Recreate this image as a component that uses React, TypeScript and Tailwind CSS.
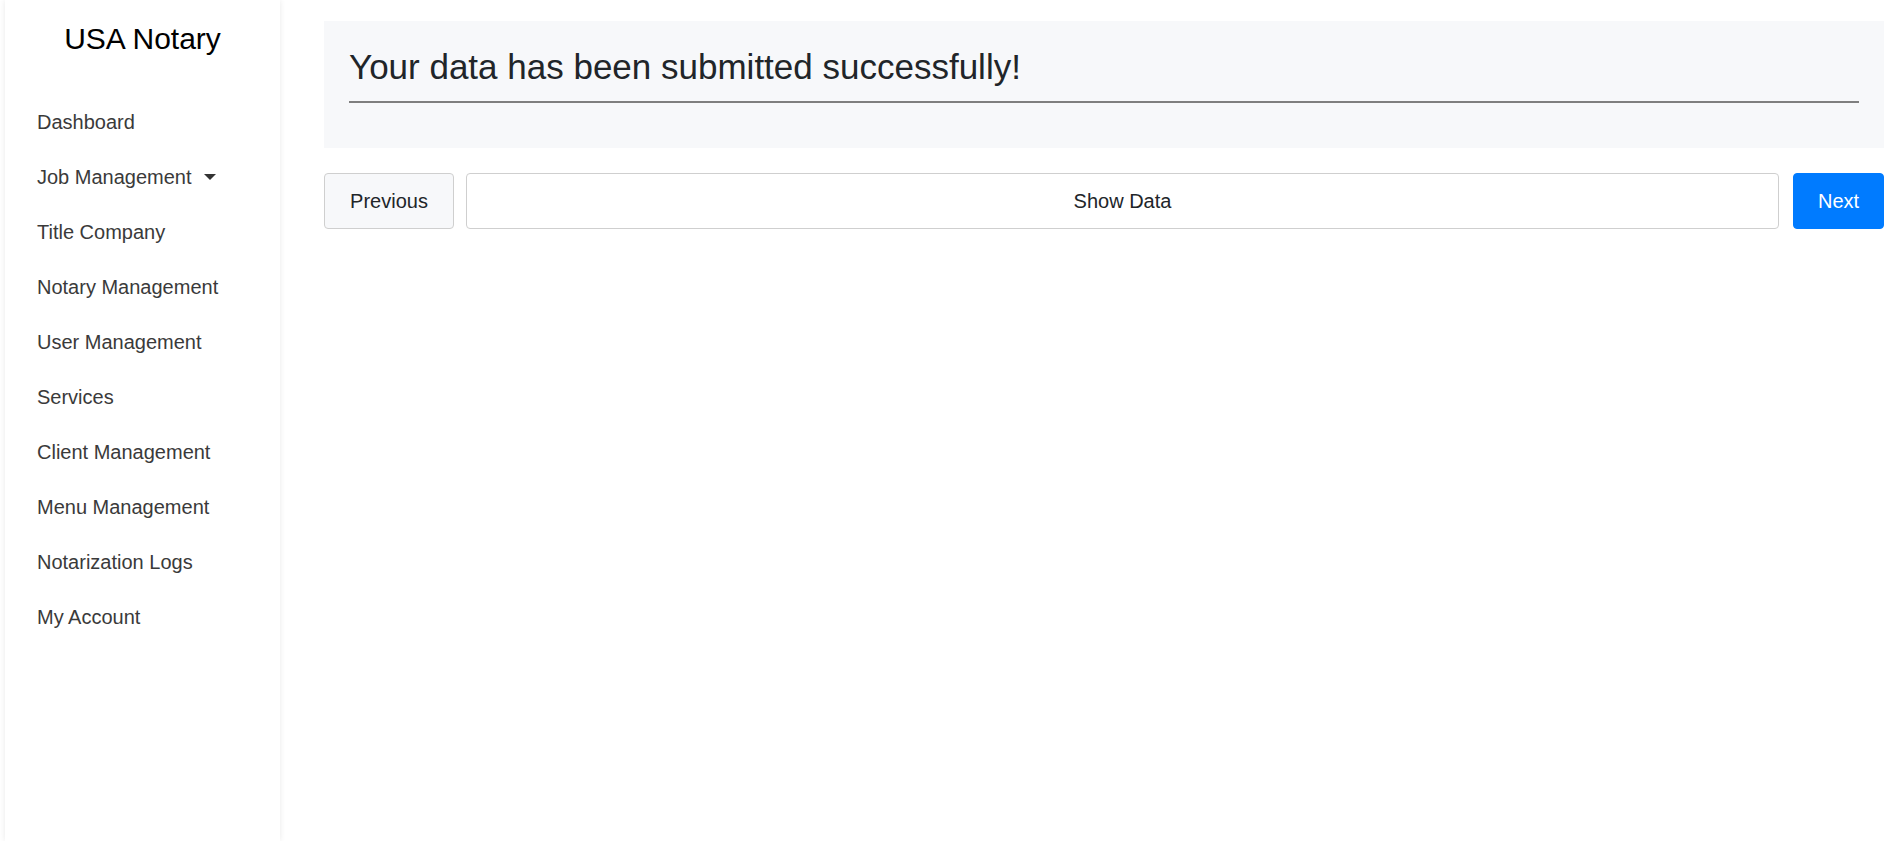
const navItems = [
  "Dashboard",
  "Job Management",
  "Title Company",
  "Notary Management",
  "User Management",
  "Services",
  "Client Management",
  "Menu Management",
  "Notarization Logs",
  "My Account",
];

function Sidebar() {
  return (
    <aside className="ml-[5px] w-[275px] min-h-[841px] shrink-0 bg-white shadow-[0_0_6px_rgba(0,0,0,0.09)]">
      <div className="flex h-[76px] items-center justify-center text-[30px] text-black">
        USA Notary
      </div>
      <nav className="mt-[18px]">
        {navItems.map((item) => (
          <div
            key={item}
            className="flex h-[55px] items-center pl-[32px] text-[20px] text-[#3a3a3a]"
          >
            {item}
            {item === "Job Management" && (
              <span className="ml-[12px] inline-block h-0 w-0 border-x-[6px] border-t-[6px] border-x-transparent border-t-[#333]" />
            )}
          </div>
        ))}
      </nav>
    </aside>
  );
}

export default function App() {
  return (
    <div className="flex min-h-[841px] bg-white font-['Liberation_Sans',Arial,sans-serif]">
      <Sidebar />
      <main className="flex-1 pl-[44px] pr-[6px] pt-[21px]">
        {/* Success banner */}
        <section className="h-[127px] bg-[#f7f8fa] px-[25px] pt-[25px]">
          <h2 className="text-[35px] leading-[42px] text-[#212529]">
            Your data has been submitted successfully!
          </h2>
          <hr className="mt-[13px] border-t-2 border-[#7f7f7f]" />
        </section>

        {/* Step buttons */}
        <div className="mt-[25px] flex gap-[12px]">
          <button className="h-[56px] w-[130px] rounded-[4px] border border-[#cfcfcf] bg-[#f7f8fa] text-[20px] text-[#212529]">
            Previous
          </button>
          <button className="h-[56px] flex-1 rounded-[4px] border border-[#cfcfcf] bg-white text-[20px] text-[#212529]">
            Show Data
          </button>
          <button className="ml-[2px] h-[56px] w-[91px] rounded-[4px] border border-[#007bff] bg-[#007bff] text-[20px] text-white">
            Next
          </button>
        </div>
      </main>
    </div>
  );
}
